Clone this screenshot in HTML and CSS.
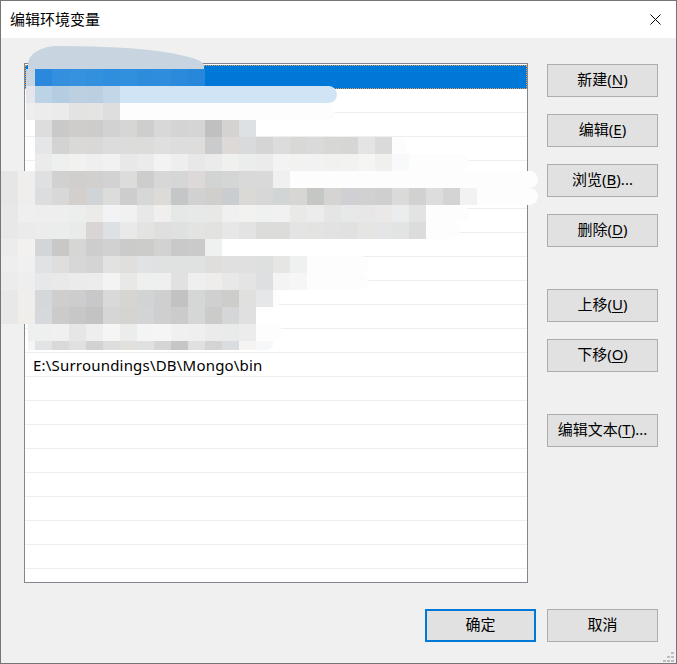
FILE: index.html
```html
<!DOCTYPE html>
<html lang="zh-CN">
<head>
<meta charset="utf-8">
<title>编辑环境变量</title>
<link rel="stylesheet" href="styles.css">
</head>
<body>
<div class="window">
  <div class="titlebar">
    <span class="title">编辑环境变量</span>
    <svg class="close" width="11" height="11" viewBox="0 0 11 11"><path d="M0.5 0.5 L10.5 10.5 M10.5 0.5 L0.5 10.5" stroke="#000" stroke-width="1" fill="none"/></svg>
  </div>
  <div class="content">
    <div class="main">
      <div class="list">
        <div class="row selected"></div>
        <div class="row"></div>
        <div class="row"></div>
        <div class="row"></div>
        <div class="row"></div>
        <div class="row"></div>
        <div class="row"></div>
        <div class="row"></div>
        <div class="row"></div>
        <div class="row"></div>
        <div class="row"></div>
        <div class="row"></div>
        <div class="row">E:\Surroundings\DB\Mongo\bin</div>
        <div class="row"></div>
        <div class="row"></div>
        <div class="row"></div>
        <div class="row"></div>
        <div class="row"></div>
        <div class="row"></div>
        <div class="row"></div>
        <div class="row"></div>
        <div class="row"></div>
      </div>
      <div class="side">
        <button class="btn">新建(<u>N</u>)</button>
        <button class="btn">编辑(<u>E</u>)</button>
        <button class="btn">浏览(<u>B</u>)...</button>
        <button class="btn">删除(<u>D</u>)</button>
        <button class="btn spaced">上移(<u>U</u>)</button>
        <button class="btn">下移(<u>O</u>)</button>
        <button class="btn spaced">编辑文本(<u>T</u>)...</button>
      </div>
    </div>
    <div class="footer">
      <button class="btn default">确定</button>
      <button class="btn">取消</button>
    </div>
  </div>
  <div class="mosaic" id="mosaic"><div class="cloud"></div></div>
  <svg class="grip" width="11" height="10" viewBox="0 0 11 10">
    <rect x="8" y="0" width="3" height="2" fill="#bdbdbd"/>
    <rect x="4" y="4" width="3" height="2" fill="#bdbdbd"/>
    <rect x="8" y="4" width="3" height="2" fill="#bdbdbd"/>
    <rect x="0" y="8" width="3" height="2" fill="#bdbdbd"/>
    <rect x="4" y="8" width="3" height="2" fill="#bdbdbd"/>
    <rect x="8" y="8" width="3" height="2" fill="#bdbdbd"/>
  </svg>
</div>
<script src="script.js"></script>
</body>
</html>
```

FILE: styles.css
```css
* { box-sizing: border-box; }
html, body { margin: 0; padding: 0; background: #f0f0f0; }
body {
  font-family: "Noto Sans", "Noto Sans CJK SC", sans-serif;
  font-size: 15px;
  color: #000;
}
.window {
  position: relative;
  width: 677px;
  height: 664px;
  border: 1px solid #767676;
  background: #f0f0f0;
  display: flex;
  flex-direction: column;
  overflow: hidden;
}
.titlebar {
  height: 37px;
  flex: none;
  background: #fff;
  display: flex;
  align-items: center;
  justify-content: space-between;
  padding-left: 9px;
}
.title {
  font-family: "Noto Sans CJK SC", sans-serif;
  font-size: 15px;
  line-height: 20px;
  margin-top: -1px;
}
.close { margin-right: 15px; }
.content {
  flex: 1;
  display: flex;
  flex-direction: column;
  padding: 25px 18px 0 23px;
}
.main {
  display: flex;
  gap: 19px;
}
.list {
  width: 504px;
  height: 520px;
  border: 1px solid #828790;
  background: #fff;
  padding-top: 1px;
  overflow: hidden;
}
.row {
  height: 24px;
  border-bottom: 1px solid #efefef;
  padding-left: 8px;
  line-height: 24px;
  letter-spacing: 0.2px;
  white-space: nowrap;
}
.row.selected {
  background: #0078d7;
  border-bottom-color: #0078d7;
  outline: 1px dotted #e39a55;
  outline-offset: -1px;
}
.side {
  display: flex;
  flex-direction: column;
  gap: 17px;
  padding-top: 1px;
}
.btn {
  width: 111px;
  height: 33px;
  border: 1px solid #adadad;
  background: #e1e1e1;
  font-family: "Noto Sans", "Noto Sans CJK SC", sans-serif;
  font-size: 15px;
  color: #000;
  padding: 0 0 4px;
  margin: 0;
  line-height: 20px;
  text-align: center;
}
.btn u { text-underline-offset: 2px; }
.btn.spaced { margin-top: 25px; }
.btn.default { border: 2px solid #0078d7; }
.footer {
  display: flex;
  justify-content: flex-end;
  gap: 11px;
  margin-top: 26px;
}
.mosaic {
  position: absolute;
  left: 0;
  top: 0;
  width: 677px;
  height: 664px;
  pointer-events: none;
}
.cloud {
  position: absolute;
  left: 27px;
  top: 45px;
  width: 176px;
  height: 24px;
  background: #c8d4df;
  border-radius: 30px 140px 0 0 / 18px 20px 0 0;
}
.mrow {
  position: absolute;
  display: flex;
  height: 17px;
}
.mcell { flex: none; height: 100%; }
.mtail {
  flex: none;
  height: 100%;
  background: #fdfdfd;
  border-radius: 0 9px 9px 0;
}
.mrow.last .mcell:last-child { border-bottom-right-radius: 6px; }
.grip {
  position: absolute;
  right: 2px;
  bottom: 1px;
}
```

FILE: script.js
```js
(function () {
  var rows = [
    {y: 68, x: 25, c: ['#c8d4df/9', '#2a88dd', '#3490de', '#3692df', '#3390dd', '#2f8edd', '#318fde', '#2d8cdc', '#2e8ddd', '#2b8adc', '#2787da']},
    {y: 85, x: 25, c: ['#e4e6e9/9', '#bcd3e6', '#b5cde0', '#bcd0e2', '#bacfe2', '#c2d6e8'], t: [336, '#d0e4f5']},
    {y: 102, x: 25, c: ['#eeeeee/9', '#ececec', '#ebebeb', '#e3e3e3', '#e4e4e3', '#dedede'], t: [334]},
    {y: 119, x: 34, c: ['#dcdddc', '#c9c9ca', '#cfcdcb', '#cdccca', '#d2d2d3', '#d8d6d4', '#cececf', '#d8d8d8', '#d4d4d5', '#d6d5d5', '#bfc0bf', '#d5d3d1', '#dee1e4']},
    {y: 136, x: 34, c: ['#e5e6e7', '#d3d3d3', '#d9d9d8', '#dad8d7', '#dcdcdd', '#dedcda', '#dcdddb', '#dfdfdf', '#dcdddc', '#dedddc', '#cacbcc', '#dcd9d7', '#d9dadb', '#d5d5d5', '#dcdcdc', '#d8d8d7', '#dadada', '#d7d7d6', '#d6d6d5', '#e3e4e3', '#dadada'], t: [406]},
    {y: 153, x: 34, c: ['#ebebeb', '#eeefef', '#f1f1f0', '#efefef', '#f1f1f1', '#e8e8e8', '#ebebeb', '#f3f3f3', '#eeeeee', '#e8e8e8', '#ebebeb', '#f0f0ef', '#ebecec', '#ebebeb', '#f3f3f3', '#f2f2f1', '#f2f2f2', '#f1f1f0', '#f2f2f1', '#f5f5f4', '#f0f0ef', '#f8f9fa'], t: [468]},
    {y: 170, x: 0, c: ['#e6e6e6', '#efeeec', '#dfe0e1', '#d1d1d1', '#d0cfcd', '#d1d0cf', '#d2d2d3', '#dedcda', '#cdcdcd', '#d7d7d7', '#d5d6d6', '#dcd9d8', '#d2d3d3', '#d4d5d5', '#d9d9d9', '#d9d9d9', '#f0f0f0'], t: [537]},
    {y: 187, x: 0, c: ['#e6e6e6', '#efeeec', '#dcdddf', '#d8d8d8', '#d3cfcd', '#d0d4d7', '#dcdddb', '#cdcdcd', '#d6d8d8', '#dddbd7', '#c4c6c8', '#d1d1d1', '#d0cfcb', '#c9cdd0', '#dad9d6', '#d7d7d8', '#d2d5d5', '#d7d6d3', '#c5c7c5', '#d5d4d2', '#d0d0d4', '#d1d1d1', '#cfcfcf', '#dadad8', '#d1d1d1', '#dcdddc', '#d4d4d4', '#f2f2f2'], t: [537]},
    {y: 204, x: 0, c: ['#e8e8e8', '#efefef', '#eeeeee', '#eeeeee', '#ebeeec', '#ebebea', '#f2f3f5', '#f1f1f1', '#e8e8e8', '#f0efed', '#e6e8e7', '#e7e9e8', '#e8e8e7', '#f0f0f0', '#f2f2f1', '#eff1f1', '#f0f1f0', '#e9e9e8', '#ececec', '#e5e5e5', '#e7e9e8', '#e7e7e7', '#ebe9e8', '#eaeced', '#e3e3e3'], t: [468]},
    {y: 221, x: 0, c: ['#e8e8e8', '#ebebeb', '#ececec', '#ebecec', '#e9ebea', '#d8d5d4', '#dde1e4', '#e9e9e9', '#e3e3e2', '#dfdfdf', '#dfe0e0', '#e3e3e2', '#e2e2e1', '#e7e7e7', '#e3e3e3', '#dcdcdb', '#dcdcdb', '#e4e4e4', '#e3e3e2', '#e1e2e1', '#e1e1e1', '#e5e5e3', '#e3e5e6', '#e2e3e3', '#dcdcdc'], t: [459]},
    {y: 238, x: 0, c: ['#ececec', '#f2f1ef', '#d2d6d9', '#c8c8c8', '#d6d6d5', '#cdcdcd', '#d0d1d1', '#cbcbca', '#cccccb', '#d2d2d2', '#c9c9c9', '#cacaca', '#eff1f0']},
    {y: 255, x: 0, c: ['#eeeeee', '#f0f0f0', '#e0e3e6', '#dedede', '#d7d7d7', '#d4d4d4', '#e2e2e1', '#e0dfdd', '#e1e2e4', '#e0e1e1', '#e0e1e1', '#e0e1e1', '#dfdedc', '#e0e0e0', '#e0e0e0', '#dedfdf', '#e6e6e5', '#eff1f0'], t: [368]},
    {y: 272, x: 0, c: ['#ececec', '#eeeeee', '#e7e8e9', '#e9e9e9', '#ebebeb', '#ececec', '#f3f3f3', '#e8e8e6', '#eef0ef', '#efefef', '#e1e1e1', '#efefef', '#eeedeb', '#e8e8e8', '#e4e4e4', '#dedfe0', '#f4f4f4', '#f6f6f6'], t: [368]},
    {y: 289, x: 0, c: ['#e8e8e8', '#efeeec', '#d5d8db', '#cececd', '#cdcdcd', '#c8c8ca', '#d9d9d9', '#d6d5d2', '#d2d3d5', '#cfcfcf', '#c2c2c2', '#d5d7d7', '#d0d0d0', '#cdcdcb', '#e0e0df', '#e6e7e8'], t: [279]},
    {y: 306, x: 0, c: ['#e8e8e8', '#efeeeb', '#d5d9dc', '#cbcbcb', '#c7c7c7', '#c3c3c4', '#d6d6d6', '#d5d4d1', '#d2d4d5', '#cfcfcf', '#cbcbcb', '#d5d7d7', '#cbcbc9', '#d4d6d8', '#e0e0e0']},
    {y: 323, x: 27, c: ['#eef0f0/7', '#eef0f0', '#f0f0f0', '#e6e6e6', '#eeeeee', '#f5f5f4', '#ebedec', '#f4f4f4', '#f5f5f5', '#f0f0f0', '#efefef', '#ebebeb', '#e9eaea', '#ececec'], t: [281]},
    {y: 340, x: 27, h: 9, last: true, c: ['#f5f5f5/7', '#e2e3e4', '#d9d9d9', '#e0e0e0', '#d2d2d2', '#dcdddc', '#e1e0dc', '#dfe0e1', '#d5d5d5', '#c6c6c6', '#dfe0e0', '#d5d4d2', '#dadddf', '#f5f4f2', '#f6f7f9']}
  ];
  var host = document.getElementById('mosaic');
  rows.forEach(function (r) {
    var row = document.createElement('div');
    row.className = 'mrow' + (r.last ? ' last' : '');
    row.style.left = r.x + 'px';
    row.style.top = r.y + 'px';
    if (r.h) row.style.height = r.h + 'px';
    var cx = r.x;
    r.c.forEach(function (spec) {
      var parts = spec.split('/');
      var w = parts[1] ? parseInt(parts[1], 10) : 17;
      var cell = document.createElement('div');
      cell.className = 'mcell';
      cell.style.width = w + 'px';
      cell.style.background = parts[0];
      row.appendChild(cell);
      cx += w;
    });
    if (r.t && r.t[0] > cx) {
      var tail = document.createElement('div');
      tail.className = 'mtail';
      tail.style.width = (r.t[0] - cx) + 'px';
      if (r.t[1]) tail.style.background = r.t[1];
      row.appendChild(tail);
    }
    host.appendChild(row);
  });
})();
```
